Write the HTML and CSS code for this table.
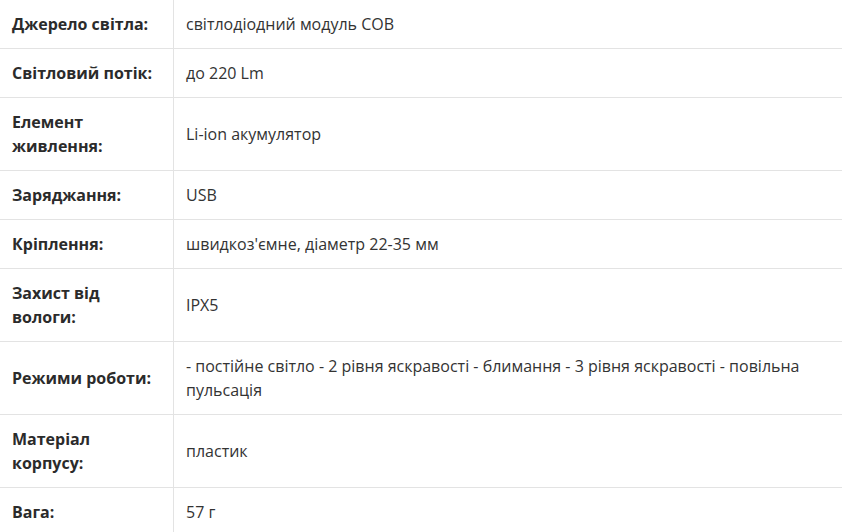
FILE: index.html
```html
<!DOCTYPE html>
<html lang="uk">
<head>
<meta charset="utf-8">
<link rel="stylesheet" href="styles.css">
</head>
<body>
<table class="specs">
  <tbody>
    <tr><th>Джерело світла:</th><td>світлодіодний модуль COB</td></tr>
    <tr><th>Світловий потік:</th><td>до 220 Lm</td></tr>
    <tr><th>Елемент живлення:</th><td>Li-ion акумулятор</td></tr>
    <tr><th>Заряджання:</th><td>USB</td></tr>
    <tr><th>Кріплення:</th><td>швидкоз'ємне, діаметр 22-35 мм</td></tr>
    <tr><th>Захист від вологи:</th><td>IPX5</td></tr>
    <tr><th>Режими роботи:</th><td>- постійне світло - 2 рівня яскравості - блимання - 3 рівня яскравості - повільна пульсація</td></tr>
    <tr><th>Матеріал корпусу:</th><td>пластик</td></tr>
    <tr><th>Вага:</th><td>57 г</td></tr>
  </tbody>
</table>
</body>
</html>
```

FILE: styles.css
```css
html, body {
  margin: 0;
  padding: 0;
  background: #fff;
}
body {
  font-family: "Open Sans", "Noto Sans", sans-serif;
  font-size: 16px;
  line-height: 24px;
  color: #333;
}
.specs {
  width: 842px;
  border-collapse: collapse;
  border-spacing: 0;
}
.specs th,
.specs td {
  padding: 12px;
  vertical-align: middle;
  text-align: left;
  border-bottom: 1px solid #e3e3e3;
}
.specs th {
  width: 149px;
  font-weight: 700;
  color: #2b2b2b;
  border-right: 1px solid #e3e3e3;
}
.specs td {
  font-weight: 400;
}
```
